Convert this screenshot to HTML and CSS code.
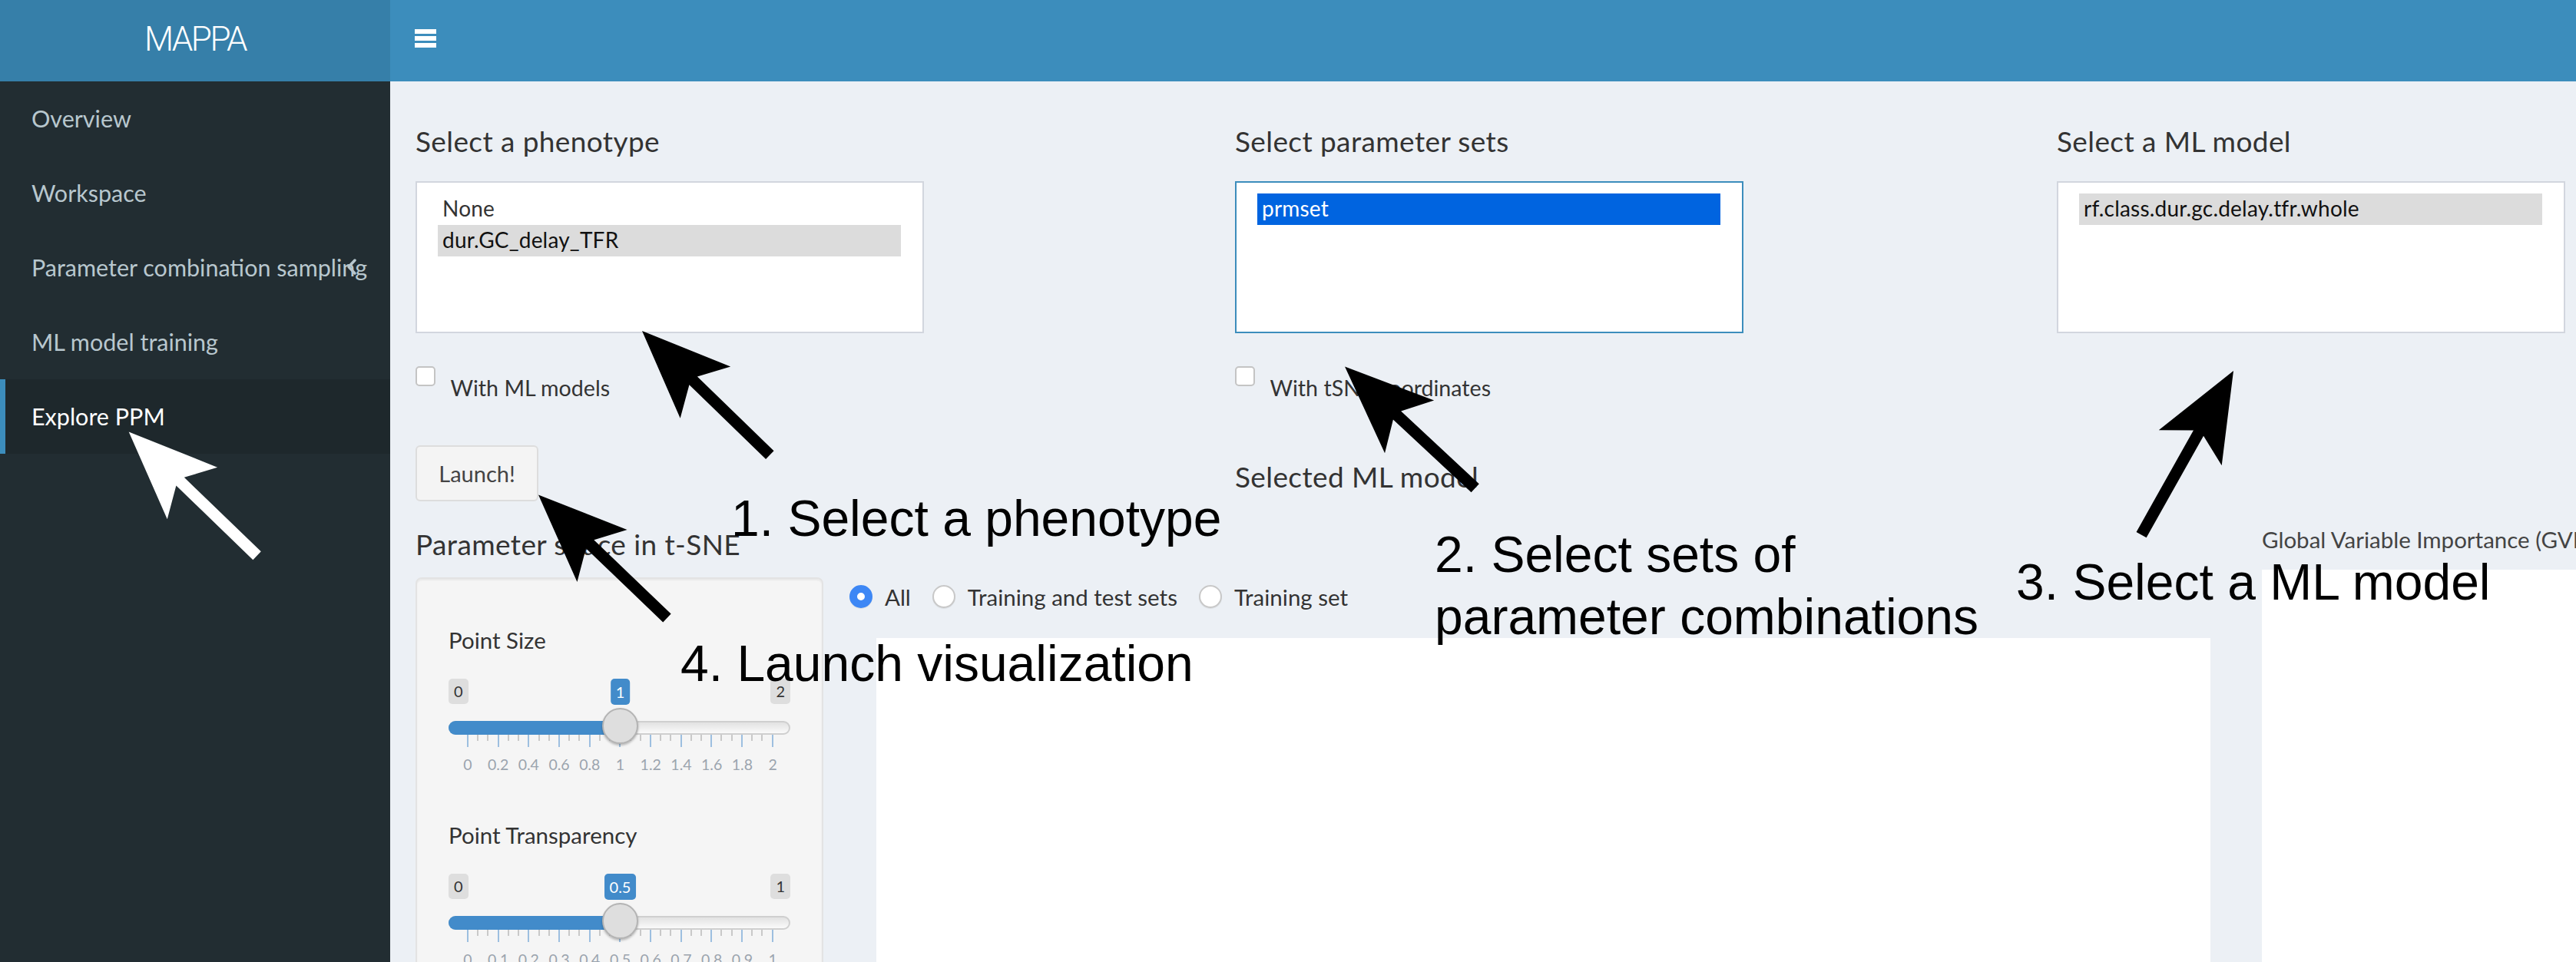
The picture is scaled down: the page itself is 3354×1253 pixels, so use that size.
FILE: index.html
```html
<!DOCTYPE html>
<html lang="en">
<head>
<meta charset="utf-8">
<title>MAPPA</title>
<link rel="stylesheet" href="styles.css">
</head>
<body>
<div class="app">
  <header class="main-header">
    <div class="logo">MAPPA</div>
    <nav class="navbar"><span class="toggle"><i></i><i></i><i></i></span></nav>
  </header>
  <aside class="sidebar">
    <ul class="menu">
      <li>Overview</li>
      <li>Workspace</li>
      <li>Parameter combination sampling<svg class="angle" viewBox="0 0 13 21"><polyline points="11,2 3,10.5 11,19" fill="none" stroke="#b8c7ce" stroke-width="3.5" stroke-linecap="round" stroke-linejoin="round"/></svg></li>
      <li>ML model training</li>
      <li class="active">Explore PPM</li>
    </ul>
  </aside>
  <main class="content">
    <div class="row-top">
      <div class="col">
        <div class="label">Select a phenotype</div>
        <div class="listbox">
          <div class="opt">None</div>
          <div class="opt sel">dur.GC_delay_TFR</div>
        </div>
        <div class="check"><span class="box"></span><span class="check-label">With ML models</span></div>
        <div class="btn">Launch!</div>
      </div>
      <div class="col">
        <div class="label">Select parameter sets</div>
        <div class="listbox focus">
          <div class="opt sel-focus">prmset</div>
        </div>
        <div class="check"><span class="box"></span><span class="check-label">With tSNE coordinates</span></div>
        <div class="selected-title">Selected ML model</div>
      </div>
      <div class="col">
        <div class="label">Select a ML model</div>
        <div class="listbox">
          <div class="opt sel">rf.class.dur.gc.delay.tfr.whole</div>
        </div>
      </div>
    </div>
    <div class="row-bottom">
      <div class="left-block">
        <h4 class="label">Parameter space in t-SNE</h4>
        <div class="sb-layout">
          <div class="well">
            <div class="slider-group">
              <div class="slider-label">Point Size</div>
              <div class="irs" style="--p:0.5">
                <div class="irs-bubbles">
                  <span class="irs-min">0</span>
                  <span class="irs-single">1</span>
                  <span class="irs-max">2</span>
                </div>
                <div class="irs-line"><span class="irs-bar"></span><span class="irs-handle"></span></div>
                <div class="irs-grid">
                  <i class="big"></i><i></i><i></i><i class="big"></i><i></i><i></i><i class="big"></i><i></i><i></i><i class="big"></i><i></i><i></i><i class="big"></i><i></i><i></i><i class="big"></i><i></i><i></i><i class="big"></i><i></i><i></i><i class="big"></i><i></i><i></i><i class="big"></i><i></i><i></i><i class="big"></i><i></i><i></i><i class="big"></i>
                </div>
                <div class="irs-grid-text">
                  <span>0</span><span>0.2</span><span>0.4</span><span>0.6</span><span>0.8</span><span>1</span><span>1.2</span><span>1.4</span><span>1.6</span><span>1.8</span><span>2</span>
                </div>
              </div>
            </div>
            <div class="slider-group">
              <div class="slider-label">Point Transparency</div>
              <div class="irs" style="--p:0.5">
                <div class="irs-bubbles">
                  <span class="irs-min">0</span>
                  <span class="irs-single">0.5</span>
                  <span class="irs-max">1</span>
                </div>
                <div class="irs-line"><span class="irs-bar"></span><span class="irs-handle"></span></div>
                <div class="irs-grid">
                  <i class="big"></i><i></i><i></i><i class="big"></i><i></i><i></i><i class="big"></i><i></i><i></i><i class="big"></i><i></i><i></i><i class="big"></i><i></i><i></i><i class="big"></i><i></i><i></i><i class="big"></i><i></i><i></i><i class="big"></i><i></i><i></i><i class="big"></i><i></i><i></i><i class="big"></i><i></i><i></i><i class="big"></i>
                </div>
                <div class="irs-grid-text">
                  <span>0</span><span>0.1</span><span>0.2</span><span>0.3</span><span>0.4</span><span>0.5</span><span>0.6</span><span>0.7</span><span>0.8</span><span>0.9</span><span>1</span>
                </div>
              </div>
            </div>
          </div>
          <div class="main-panel">
            <div class="radios">
              <span class="radio-item"><span class="radio on"></span>All</span>
              <span class="radio-item"><span class="radio"></span>Training and test sets</span>
              <span class="radio-item"><span class="radio"></span>Training set</span>
            </div>
            <div class="plot"></div>
          </div>
        </div>
      </div>
      <div class="right-block">
        <div class="gvi-title">Global Variable Importance (GVI)</div>
        <div class="gvi-plot"></div>
      </div>
    </div>
  </main>
</div>

<div class="annot a1">1. Select a phenotype</div>
<div class="annot a2">2. Select sets of<br>parameter combinations</div>
<div class="annot a3">3. Select a ML model</div>
<div class="annot a4">4. Launch visualization</div>

<svg class="arrows" width="3354" height="1253" viewBox="0 0 3354 1253">
  <defs>
    <polygon id="arr" points="0,0 115,-47 93,-7.5 232,-7.5 232,7.5 93,7.5 115,47"/>
    <polygon id="arrlong" points="0,0 115,-47 93,-7.5 245,-7.5 245,7.5 93,7.5 115,47"/>
  </defs>
  <use href="#arr" fill="#ffffff" transform="translate(167.7 562.6) rotate(44)"/>
  <use href="#arr" fill="#000000" transform="translate(836 431) rotate(44.2)"/>
  <use href="#arr" fill="#000000" transform="translate(701 644.4) rotate(43.8)"/>
  <use href="#arr" fill="#000000" transform="translate(1751 477.5) rotate(43)"/>
  <use href="#arrlong" fill="#000000" transform="translate(2908 483) rotate(119.3)"/>
</svg>
</body>
</html>
```

FILE: styles.css
```css
* { box-sizing: border-box; }

html, body { margin: 0; padding: 0; }

body {
  width: 3354px;
  height: 1253px;
  overflow: hidden;
  position: relative;
  background: #ecf0f5;
  font-family: Lato, "Noto Sans", sans-serif;
  color: #333;
}

.app {
  display: grid;
  grid-template-columns: 508px 1fr;
  grid-template-rows: 106px 1147px;
  width: 3354px;
  height: 1253px;
}

/* header */
.main-header {
  grid-column: 1 / 3;
  display: flex;
}

.logo {
  width: 508px;
  height: 106px;
  background: #367fa9;
  color: #fff;
  font-family: Roboto, "Liberation Sans", sans-serif;
  font-weight: 300;
  font-size: 44px;
  letter-spacing: -2.5px;
  line-height: 102px;
  text-align: center;
}

.navbar {
  flex: 1;
  background: #3c8dbc;
  padding: 38px 0 0 32px;
}

.toggle {
  display: flex;
  flex-direction: column;
  gap: 3.5px;
  width: 28px;
}

.toggle i {
  display: block;
  height: 5.5px;
  background: #fff;
}

/* sidebar */
.sidebar { background: #222d32; }

.menu {
  list-style: none;
  margin: 0;
  padding: 0;
}

.menu li {
  position: relative;
  height: 97px;
  line-height: 97px;
  padding-left: 41px;
  font-size: 30.5px;
  color: #b8c7ce;
  white-space: nowrap;
}

.menu li.active {
  background: #1e282c;
  color: #fff;
  border-left: 7px solid #3c8dbc;
  padding-left: 34px;
}

.menu .angle {
  position: absolute;
  left: 451px;
  top: 37px;
  width: 13px;
  height: 21px;
}

/* content */
.content {
  padding-left: 33px;
  overflow: hidden;
}

.row-top {
  display: grid;
  grid-template-columns: 1067px 1070px 1070px;
}

.col { padding-top: 58.5px; }

.label {
  margin: 0;
  font-size: 37px;
  line-height: 37px;
  letter-spacing: 0.4px;
  font-weight: 400;
  color: #333;
  white-space: nowrap;
}

.listbox {
  margin-top: 34.5px;
  width: 662px;
  height: 198px;
  background: #fff;
  border: 2px solid #d2d6de;
  padding: 14px 28px 0 27px;
}

.listbox.focus { border-color: #3c8dbc; }

.opt {
  height: 41px;
  line-height: 39px;
  padding-left: 6px;
  font-size: 28px;
  letter-spacing: 0.2px;
  color: #333;
  white-space: nowrap;
}

.opt.sel { background: #dcdcdc; color: #111; }
.opt.sel-focus { background: #0064e0; color: #fff; }

.check {
  display: flex;
  align-items: flex-start;
  margin-top: 43px;
  height: 43px;
}

.box {
  flex: none;
  width: 26px;
  height: 26px;
  border: 2px solid #c4c4c4;
  border-radius: 5px;
  background: #fff;
}

.check-label {
  margin-left: 19.5px;
  margin-top: 14px;
  font-size: 28.6px;
  line-height: 28.6px;
  white-space: nowrap;
}

.btn {
  margin-top: 60px;
  width: 160px;
  height: 73px;
  border: 2px solid #ddd;
  border-radius: 6px;
  background: #f4f4f4;
  color: #444;
  font-size: 29px;
  line-height: 69px;
  text-align: center;
}

.selected-title {
  margin-top: 81.7px;
  font-size: 37px;
  line-height: 37px;
  letter-spacing: 0.4px;
  color: #333;
  white-space: nowrap;
}

/* bottom row */
.row-bottom {
  display: grid;
  grid-template-columns: 2337px 1fr;
  column-gap: 67px;
  margin-top: 36.5px;
}

.sb-layout {
  display: flex;
  gap: 34px;
  margin-top: 25.5px;
}

.well {
  flex: none;
  width: 531px;
  height: 620px;
  background: #f5f5f5;
  border: 2px solid #e3e3e3;
  border-radius: 8px;
  box-shadow: inset 0 2px 2px rgba(0, 0, 0, 0.05);
  padding: 64.8px 41px 0;
}

.slider-group { margin-bottom: 66.3px; }

.slider-label {
  font-size: 29.5px;
  line-height: 29.5px;
  color: #333;
  white-space: nowrap;
}

.irs { margin-top: 35.7px; }

.irs-bubbles {
  position: relative;
  display: flex;
  justify-content: space-between;
  height: 33px;
}

.irs-min, .irs-max {
  flex: none;
  height: 33px;
  padding: 0 7px;
  border-radius: 5px;
  background: #dedede;
  color: #333;
  font-size: 20px;
  line-height: 33px;
}

.irs-single {
  position: absolute;
  top: 0;
  left: calc(25px + (100% - 48px) * var(--p));
  transform: translateX(-50%);
  height: 34px;
  padding: 0 7px;
  border-radius: 5px;
  background: #428bca;
  color: #fff;
  font-size: 20px;
  line-height: 34px;
  white-space: nowrap;
}

.irs-line {
  position: relative;
  margin-top: 22px;
  height: 18px;
  border: 2px solid #cfcfcf;
  border-radius: 9px;
  background: linear-gradient(#e2e2e2, #fafafa);
}

.irs-bar {
  position: absolute;
  left: -2px;
  top: -2px;
  height: 18px;
  width: calc(25px + (100% - 44px) * var(--p));
  background: #428bca;
  border-radius: 9px 0 0 9px;
}

.irs-handle {
  position: absolute;
  top: -19px;
  left: calc(23px + (100% - 44px) * var(--p));
  width: 47px;
  height: 47px;
  margin-left: -23.5px;
  border-radius: 50%;
  background: #dedede;
  border: 2px solid #b4b4b4;
  box-shadow: 0 2px 3px rgba(0, 0, 0, 0.25);
}

.irs-grid {
  display: flex;
  justify-content: space-between;
  align-items: flex-start;
  height: 16px;
  margin: 0 22px 0 24px;
}

.irs-grid i {
  display: block;
  width: 2px;
  height: 8px;
  background: #c9c9c9;
}

.irs-grid i.big {
  height: 16px;
  background: #9dbfe0;
}

.irs-grid-text {
  display: grid;
  grid-template-columns: repeat(11, 1fr);
  margin: 13.5px 3px 0 5px;
  font-size: 19.5px;
  line-height: 20px;
  color: #9ba4ae;
  text-align: center;
}

.main-panel { flex: 1; }

.radios {
  display: flex;
  align-items: center;
  height: 34px;
  margin-top: 8px;
  font-size: 29.5px;
  color: #333;
}

.radio-item {
  display: flex;
  align-items: center;
  margin-right: 28px;
  white-space: nowrap;
}

.radio {
  flex: none;
  width: 30px;
  height: 30px;
  margin-right: 16px;
  border-radius: 50%;
  border: 2px solid #c8c8c8;
  background: #fff;
  box-shadow: 0 1px 1px rgba(0, 0, 0, 0.08);
}

.radio.on {
  border: 10px solid #3d87f5;
  background: #fff;
}

.plot {
  margin-top: 37px;
  margin-left: 35px;
  height: 600px;
  background: #fff;
}

.gvi-title {
  font-size: 29.5px;
  line-height: 26px;
  color: #444;
  white-space: nowrap;
}

.gvi-plot {
  margin-top: 26px;
  height: 600px;
  background: #fff;
}

/* annotations */
.annot {
  position: absolute;
  font-family: "Liberation Sans", Arial, sans-serif;
  font-size: 66px;
  line-height: 66px;
  color: #000;
  white-space: nowrap;
}

.a1 { left: 952px; top: 642px; }
.a2 { left: 1868px; top: 682px; line-height: 81px; }
.a3 { left: 2625px; top: 725px; }
.a4 { left: 886px; top: 831px; }

.arrows {
  position: absolute;
  left: 0;
  top: 0;
  pointer-events: none;
}
```
